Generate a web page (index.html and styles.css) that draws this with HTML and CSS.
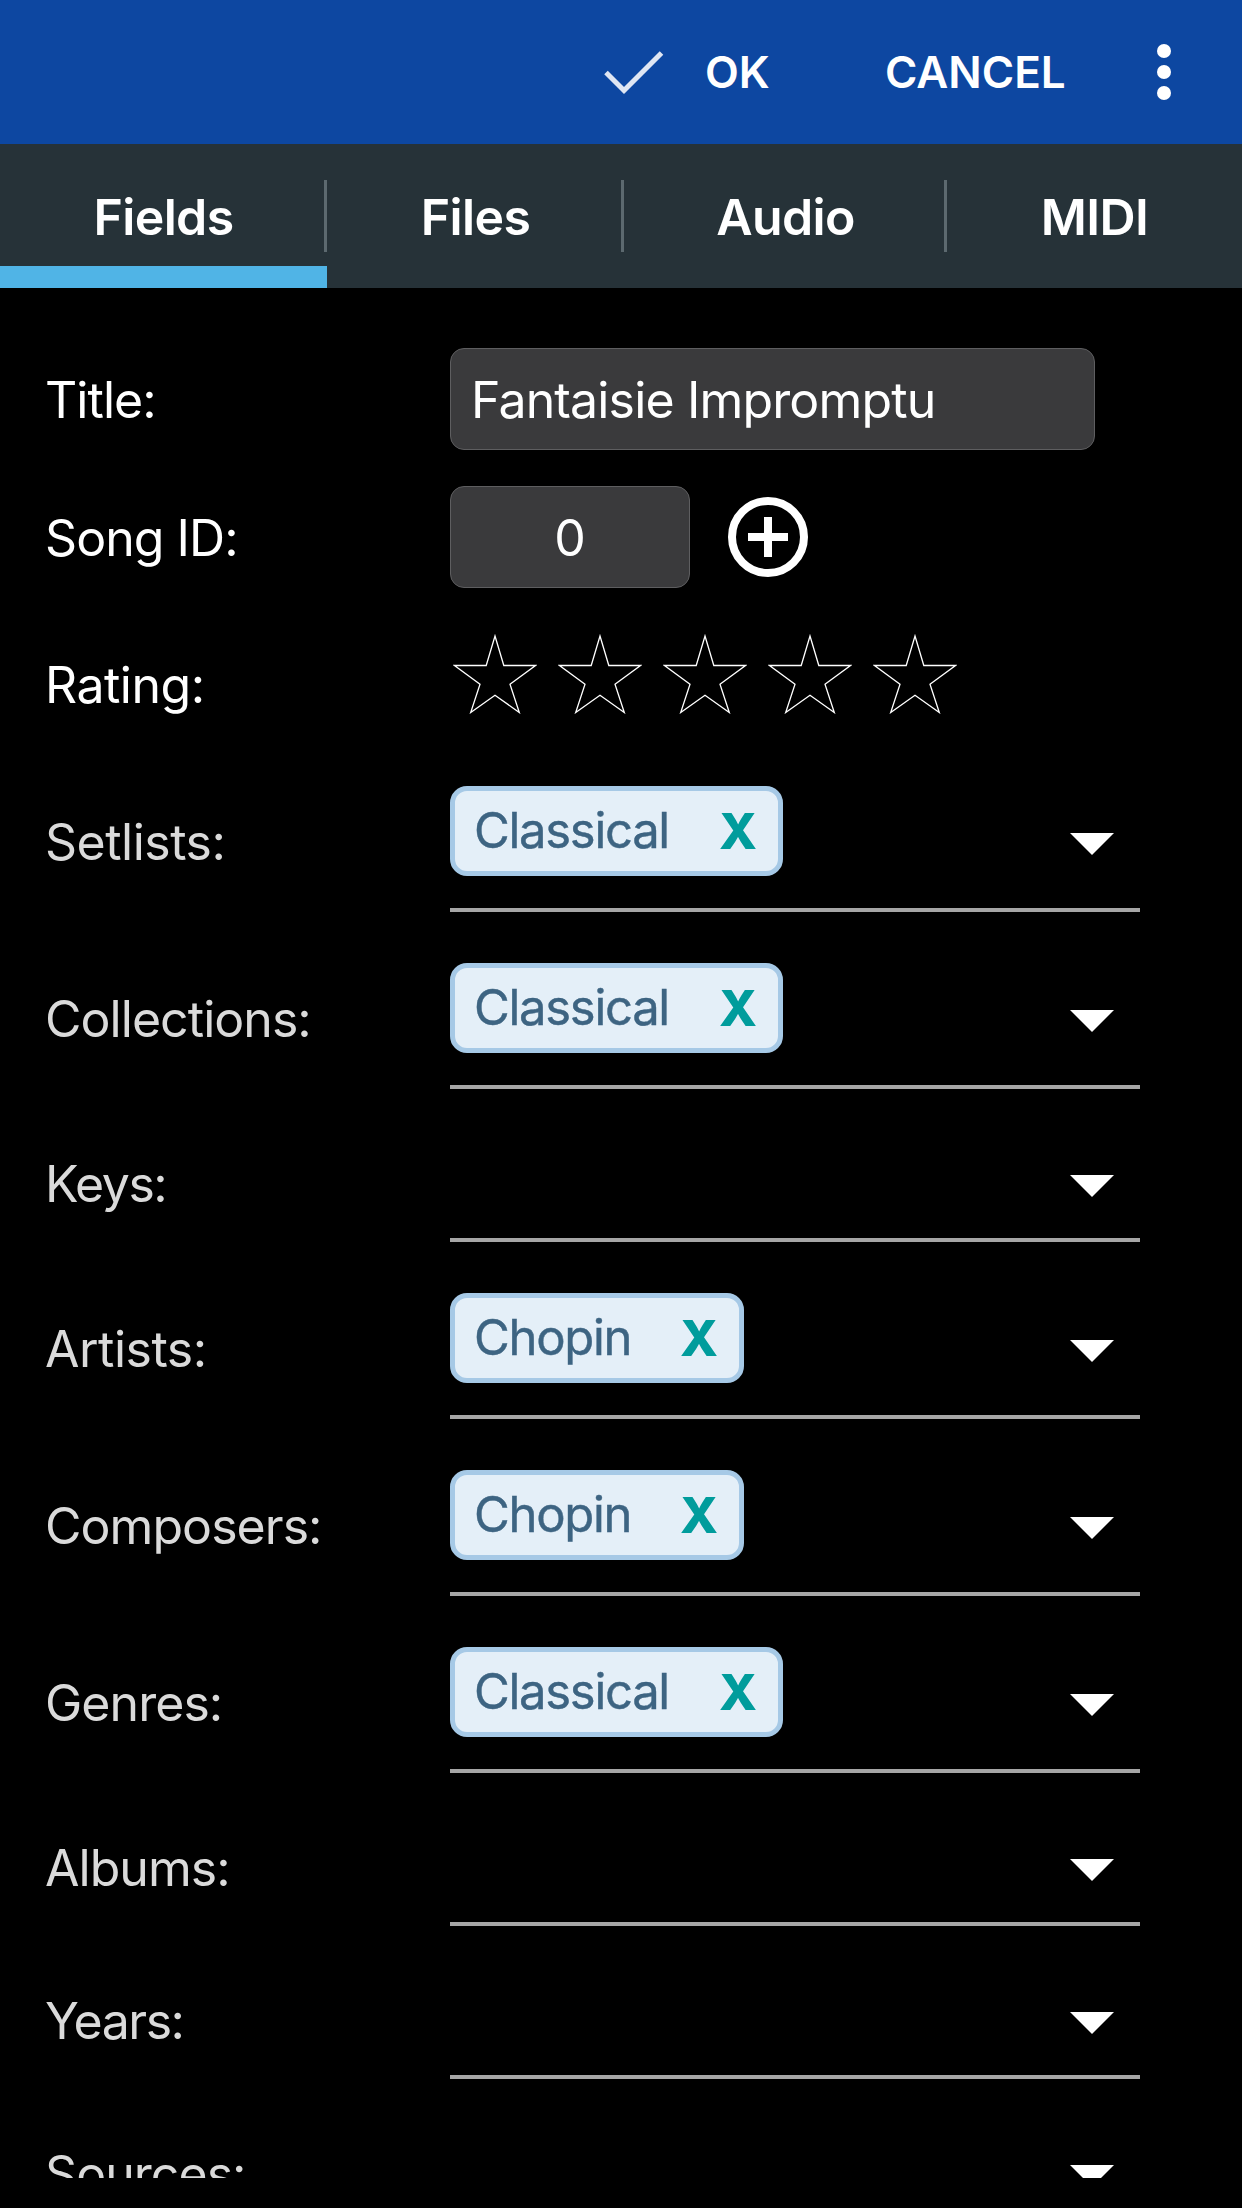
FILE: index.html
```html
<!DOCTYPE html>
<html lang="en">
<head>
  <meta charset="UTF-8" />
  <meta name="viewport" content="width=device-width, initial-scale=1.0"/>
  <title>Edit Song</title>
  <link rel="stylesheet" href="styles.css">
</head>
<body>

  <header class="toolbar">
    <svg class="check-icon" viewBox="0 0 60 46"><path d="M2 22.5 L20 40.5 L57.5 3"/></svg>
    <span class="toolbar-btn ok-btn">OK</span>
    <span class="toolbar-btn cancel-btn">CANCEL</span>
    <svg class="more-icon" viewBox="0 0 14 56"><circle cx="7" cy="7" r="7"/><circle cx="7" cy="28" r="7"/><circle cx="7" cy="49" r="7"/></svg>
  </header>

  <nav class="tabs">
    <div class="tab tab-fields active">Fields</div>
    <div class="tab tab-files">Files</div>
    <div class="tab tab-audio">Audio</div>
    <div class="tab tab-midi">MIDI</div>
  </nav>

  <main class="form">
    <div class="row row-title">
      <div class="label">Title:</div>
      <div class="input title-input">Fantaisie Impromptu</div>
    </div>
    <div class="row row-id">
      <div class="label">Song ID:</div>
      <div class="input id-input">0</div>
      <svg class="add-icon" viewBox="0 0 80 80"><circle cx="40" cy="40" r="36"/><path d="M40 20 V60 M20 40 H60"/></svg>
    </div>
    <div class="row row-rating">
      <div class="label loose">Rating:</div>
      <div class="stars">
        <svg class="star" viewBox="0 0 84 80"><path d="M42 2 L50.8 31.5 H82.5 L57 50.3 L66.3 78.5 L42 61.3 L17.7 78.5 L27 50.3 L1.5 31.5 H33.2 Z"/></svg>
        <svg class="star" viewBox="0 0 84 80"><path d="M42 2 L50.8 31.5 H82.5 L57 50.3 L66.3 78.5 L42 61.3 L17.7 78.5 L27 50.3 L1.5 31.5 H33.2 Z"/></svg>
        <svg class="star" viewBox="0 0 84 80"><path d="M42 2 L50.8 31.5 H82.5 L57 50.3 L66.3 78.5 L42 61.3 L17.7 78.5 L27 50.3 L1.5 31.5 H33.2 Z"/></svg>
        <svg class="star" viewBox="0 0 84 80"><path d="M42 2 L50.8 31.5 H82.5 L57 50.3 L66.3 78.5 L42 61.3 L17.7 78.5 L27 50.3 L1.5 31.5 H33.2 Z"/></svg>
        <svg class="star" viewBox="0 0 84 80"><path d="M42 2 L50.8 31.5 H82.5 L57 50.3 L66.3 78.5 L42 61.3 L17.7 78.5 L27 50.3 L1.5 31.5 H33.2 Z"/></svg>
      </div>
    </div>

    <div class="row field filled">
      <div class="label loose">Setlists:</div>
      <div class="select">
        <div class="chip chip-classical"><span class="chip-text">Classical</span><span class="chip-x">X</span></div>
        <span class="arrow"></span>
      </div>
    </div>
    <div class="row field filled">
      <div class="label">Collections:</div>
      <div class="select">
        <div class="chip chip-classical"><span class="chip-text">Classical</span><span class="chip-x">X</span></div>
        <span class="arrow"></span>
      </div>
    </div>
    <div class="row field">
      <div class="label tight">Keys:</div>
      <div class="select"><span class="arrow"></span></div>
    </div>
    <div class="row field filled">
      <div class="label loose">Artists:</div>
      <div class="select">
        <div class="chip chip-chopin"><span class="chip-text">Chopin</span><span class="chip-x">X</span></div>
        <span class="arrow"></span>
      </div>
    </div>
    <div class="row field filled">
      <div class="label">Composers:</div>
      <div class="select">
        <div class="chip chip-chopin"><span class="chip-text">Chopin</span><span class="chip-x">X</span></div>
        <span class="arrow"></span>
      </div>
    </div>
    <div class="row field filled">
      <div class="label">Genres:</div>
      <div class="select">
        <div class="chip chip-classical"><span class="chip-text">Classical</span><span class="chip-x">X</span></div>
        <span class="arrow"></span>
      </div>
    </div>
    <div class="row field">
      <div class="label">Albums:</div>
      <div class="select"><span class="arrow"></span></div>
    </div>
    <div class="row field">
      <div class="label tight">Years:</div>
      <div class="select"><span class="arrow"></span></div>
    </div>
    <div class="row field">
      <div class="label">Sources:</div>
      <div class="select"><span class="arrow"></span></div>
    </div>
  </main>

</body>
</html>
```
FILE: styles.css
```css
* {
  box-sizing: border-box;
}

body {
  margin: 0;
  height: 2208px;
  background: #000;
  color: #fff;
  font-family: Inter, "Liberation Sans", sans-serif;
  overflow: hidden;
}

svg {
  display: block;
  flex: none;
}

/* top bar */
.toolbar {
  height: 144px;
  background: #0d47a1;
  display: flex;
  align-items: center;
  justify-content: flex-end;
  padding-right: 71px;
}

.check-icon {
  width: 60px;
  height: 46px;
  margin-right: 41px;
  margin-top: 2px;
  fill: none;
  stroke: #dfe6f3;
  stroke-width: 5;
}

.toolbar-btn {
  font-size: 44px;
  font-weight: 600;
  line-height: 60px;
  white-space: nowrap;
}

.ok-btn {
  width: 180px;
}

.cancel-btn {
  width: 272px;
}

.more-icon {
  width: 14px;
  height: 56px;
  fill: #fff;
}

/* tabs */
.tabs {
  height: 144px;
  background: #263238;
  display: flex;
}

.tab {
  display: flex;
  align-items: center;
  justify-content: center;
  padding-top: 2px;
  font-size: 50px;
  font-weight: 600;
  letter-spacing: -0.6px;
  background: linear-gradient(#5c696f, #5c696f) right center / 3px 72px no-repeat;
}

.tab-fields {
  width: 327px;
}

.tab-files {
  width: 297px;
}

.tab-audio {
  width: 323px;
}

.tab-midi {
  width: 295px;
  background: none;
}

.tab.active {
  box-shadow: inset 0 -22px #50b4e6;
}

/* form */
.form {
  height: 1890px;
  padding: 60px 0 0 45px;
  overflow: hidden;
}

.row {
  display: flex;
  font-size: 50px;
}

.label {
  width: 405px;
  flex: none;
  line-height: 60px;
  letter-spacing: -0.95px;
}

.label.tight {
  letter-spacing: -1.5px;
}

.label.loose {
  letter-spacing: -0.5px;
}

.row-title {
  height: 138px;
}

.row-id {
  height: 147px;
}

.row-rating {
  height: 102px;
}

.row-title .label,
.row-id .label {
  padding-top: 22px;
}

.row-rating .label {
  padding-top: 22px;
}

.input {
  height: 102px;
  background: #3a3a3c;
  border: 1px solid #5e5e60;
  border-radius: 14px;
  line-height: 103px;
  white-space: nowrap;
}

.title-input {
  width: 645px;
  padding-left: 20px;
  letter-spacing: -0.85px;
}

.id-input {
  width: 240px;
  text-align: center;
}

.add-icon {
  width: 80px;
  height: 80px;
  margin: 11px 0 0 38px;
  fill: none;
  stroke: #fff;
  stroke-width: 8;
}

.stars {
  display: flex;
  gap: 21px;
  padding: 1px 0 0 2.5px;
}

.star {
  width: 84px;
  height: 80px;
  fill: none;
  stroke: #fff;
  stroke-width: 1.3;
}

/* dropdown fields */
.field {
  height: 153px;
  padding-top: 51px;
}

.field .label {
  color: #dadada;
  padding-top: 14px;
}

.select {
  width: 690px;
  height: 102px;
  border-bottom: 4px solid #a6a6a6;
  display: flex;
  align-items: flex-start;
}

.arrow {
  width: 44px;
  height: 22px;
  margin: 35px 26px 0 auto;
  background: #fff;
  clip-path: polygon(0 0, 100% 0, 50% 100%);
}

.filled {
  height: 177px;
}

.filled .label {
  padding-top: 26px;
}

.filled .select {
  height: 126px;
}

.filled .arrow {
  margin-top: 47px;
}

.chip {
  height: 90px;
  padding: 0 3px 0 19px;
  display: flex;
  justify-content: space-between;
  background: #e4eff8;
  border: 5px solid #a6c9e6;
  border-radius: 17px;
  color: #3d6482;
  line-height: 80px;
}

.chip-classical {
  width: 333px;
}

.chip-chopin {
  width: 294px;
}

.chip-text {
  font-size: 49px;
  letter-spacing: -1.3px;
  -webkit-text-stroke: 0.4px #3d6482;
}

.chip-x {
  color: #009c9c;
  font-weight: 800;
  padding-right: 18px;
}
```
